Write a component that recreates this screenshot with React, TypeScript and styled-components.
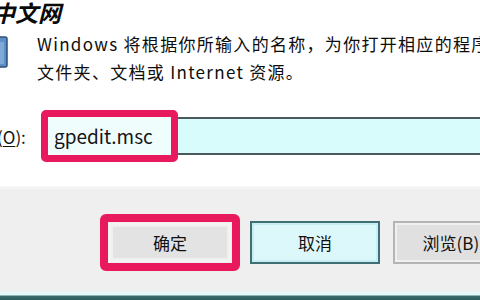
import React from "react";
import styled, { createGlobalStyle } from "styled-components";

const Global = createGlobalStyle`
  html, body { margin: 0; padding: 0; background: #fff; }
  body { font-family: "Noto Sans CJK SC", "Liberation Sans", sans-serif; }
`;

const Dialog = styled.div`
  width: 480px;
  height: 300px;
  overflow: hidden;
  display: flex;
  flex-direction: column;
  background: #fff;
  color: #111;
`;

const Top = styled.div`
  height: 186px;
  display: flex;
  flex-direction: column;
  background: #fff;
`;

const Title = styled.div`
  margin-left: -8px;
  height: 28px;
  font-size: 23px;
  line-height: 24px;
  font-weight: bold;
  font-style: italic;
  color: #0a0a0a;
  white-space: nowrap;
`;

const MessageRow = styled.div`
  display: flex;
  margin-top: 2px;
  height: 56px;
`;

const IconBox = styled.div`
  width: 37px;
  flex: none;
  display: flex;
  align-items: flex-start;
  padding-top: 5px;
  overflow: hidden;
`;

const Message = styled.div`
  font-size: 17px;
  letter-spacing: 1.3px;
  line-height: 28px;
  white-space: nowrap;
  color: #0d0d0d;
`;

const InputRow = styled.div`
  display: flex;
  align-items: center;
  margin-top: 24px;
  height: 52px;
`;

const Label = styled.div`
  width: 48px;
  flex: none;
  margin-left: -3px;
  font-size: 17px;
  white-space: nowrap;
  color: #111;
`;

const Under = styled.span`
  text-decoration: underline;
  text-underline-offset: 2px;
`;

const Field = styled.div`
  position: relative;
  flex: 1;
  height: 34px;
  border-top: 2px solid #4b5a5a;
  border-bottom: 2px solid #4b5a5a;
  background: #d8fbfb;
  display: flex;
  align-items: center;
  padding-left: 9px;
`;

const FieldText = styled.span`
  position: relative;
  z-index: 1;
  font-size: 19px;
  color: #151515;
  margin-top: -1px;
`;

const FieldMark = styled.div`
  position: absolute;
  left: -4px;
  top: -9px;
  width: 123px;
  height: 38px;
  border: 7px solid #e8195c;
  border-radius: 5px;
  background: #effdfd;
`;

const Footer = styled.div`
  flex: 1;
  display: flex;
  align-items: center;
  padding: 7px 0 0 100px;
  background: linear-gradient(#f7f7f7 0, #efefef 4px, #efefef 100%);
`;

const Mark = styled.div`
  flex: none;
  border: 8px solid #e8195c;
  border-radius: 6px;
  padding: 1px;
  display: flex;
`;

const Button = styled.div<{ $tone: "ok" | "focus" | "plain" }>`
  flex: none;
  box-sizing: border-box;
  width: ${(p) => (p.$tone === "ok" ? 122 : 130)}px;
  height: ${(p) => (p.$tone === "ok" ? 39 : 43)}px;
  display: flex;
  align-items: center;
  justify-content: center;
  font-size: 17px;
  color: #111;
  background: ${(p) =>
    p.$tone === "focus" ? "#ddf8fb" : p.$tone === "ok" ? "#e3e3e3" : "#e0e0e0"};
  border: 2px solid
    ${(p) =>
      p.$tone === "focus" ? "#3f6f74" : p.$tone === "ok" ? "#f4f4f4" : "#b4b4b4"};
  box-shadow: inset 0 0 0 2px
    ${(p) => (p.$tone === "focus" ? "#c7eef2" : "#f0f0f0")};
`;

const Buttons = styled.div`
  display: flex;
  align-items: center;
  gap: 13px;
  margin-left: 10px;
`;

const BottomEdge = styled.div`
  height: 8px;
  flex: none;
  background: linear-gradient(#e3fafa 0, #e3fafa 3px, #3a6d6c 4px, #2c5e5d 100%);
`;

function RunIcon() {
  return (
    <svg width="34" height="34" viewBox="0 0 34 34" style={{ marginLeft: -26 }}>
      <rect x="1" y="2" width="32" height="30" rx="2" fill="#5b8fc7" stroke="#2f4f73" strokeWidth="1.5" />
      <rect x="4" y="7" width="26" height="22" fill="#a9cdef" />
      <rect x="26" y="7" width="4" height="22" fill="#7fa9d6" />
    </svg>
  );
}

export default function App() {
  return (
    <>
      <Global />
      <Dialog>
        <Top>
          <Title>中文网</Title>
          <MessageRow>
            <IconBox>
              <RunIcon />
            </IconBox>
            <Message>
              Windows 将根据你所输入的名称，为你打开相应的程序、
              <br />
              文件夹、文档或 Internet 资源。
            </Message>
          </MessageRow>
          <InputRow>
            <Label>
              (<Under>O</Under>):
            </Label>
            <Field>
              <FieldMark />
              <FieldText>gpedit.msc</FieldText>
            </Field>
          </InputRow>
        </Top>
        <Footer>
          <Mark>
            <Button $tone="ok">确定</Button>
          </Mark>
          <Buttons>
            <Button $tone="focus">取消</Button>
            <Button $tone="plain">浏览(B)...</Button>
          </Buttons>
        </Footer>
        <BottomEdge />
      </Dialog>
    </>
  );
}
